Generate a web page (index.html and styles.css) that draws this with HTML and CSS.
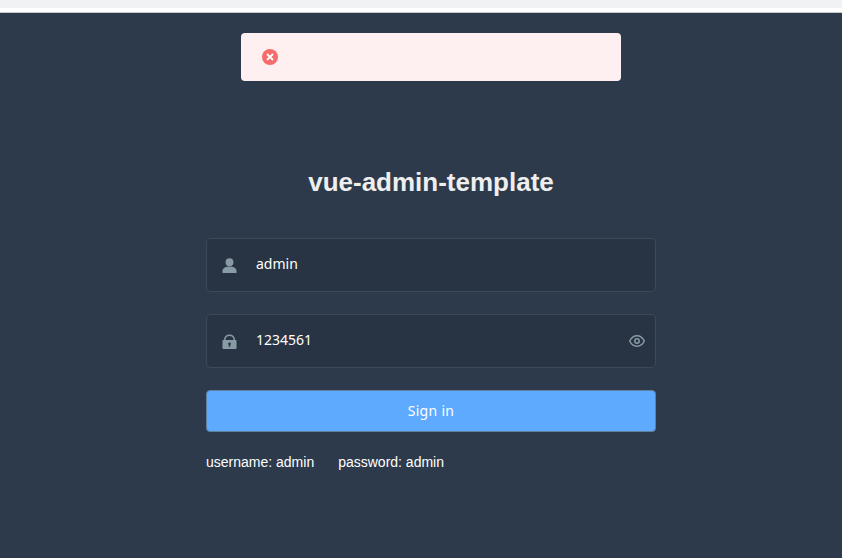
FILE: index.html
```html
<!DOCTYPE html>
<html lang="en">
<head>
    <meta charset="UTF-8">
    <title>vue-admin-template</title>
    <link rel="stylesheet" href="styles.css">
</head>
<body>
<div class="topbar"></div>
<div class="login-container">
    <div class="message">
        <svg class="message-icon" viewBox="0 0 16 16">
            <circle cx="8" cy="8" r="8" fill="#f56c6c"/>
            <path d="M5 5l6 6M11 5l-6 6" stroke="#fff" stroke-width="1.8" fill="none"/>
        </svg>
    </div>
    <form class="login-form">
        <h3 class="title">vue-admin-template</h3>
        <div class="form-item">
            <span class="svg-container">
                <svg viewBox="0 0 16 16" class="icon"><circle cx="8" cy="4.400" r="4.200"/><path d="M.5 16v-2.400C.5 10.600 4.400 9 8 9s7.500 1.600 7.500 4.600V16z"/></svg>
            </span>
            <input class="form-input" type="text" value="admin">
        </div>
        <div class="form-item">
            <span class="svg-container">
                <svg viewBox="0 0 16 16" class="icon"><path d="M2.800 6.500C3 3 5 1.200 8 1.200s5 1.800 5.200 5.300" fill="none" stroke="#889aa4" stroke-width="1.600"/><path fill-rule="evenodd" d="M1.400 6.400h13.200c.5 0 .9.400.9.900v7.800c0 .5-.4.900-.9.900H1.400c-.5 0-.9-.4-.9-.9V7.300c0-.5.400-.9.900-.9zM8 9.200a1.400 1.400 0 0 0-.8 2.600v1.700h1.600v-1.700A1.400 1.400 0 0 0 8 9.200z"/></svg>
            </span>
            <input class="form-input" type="text" value="1234561">
            <span class="show-pwd">
                <svg viewBox="0 0 16 16" class="eye"><path d="M.7 8C2.300 4.600 5 2.800 8 2.800s5.700 1.800 7.300 5.200c-1.600 3.400-4.300 5.200-7.300 5.200S2.300 11.400.7 8z"/><circle cx="8" cy="8" r="2.200"/></svg>
            </span>
        </div>
        <button class="login-btn" type="button">Sign in</button>
        <div class="tips">
            <span>username: admin</span>
            <span>password: admin</span>
        </div>
    </form>
</div>
</body>
</html>
```

FILE: styles.css
```css
html, body {
    height: 100%;
}

body {
    margin: 0;
    display: flex;
    flex-direction: column;
    overflow: hidden;
    background-color: #fff;
    font-family: "Liberation Sans", Arial, sans-serif;
}

.topbar {
    height: 8px;
    margin-bottom: 4px;
    background-color: #f1f2f4;
    flex-shrink: 0;
}

.login-container {
    flex: 1;
    position: relative;
    border-top: 1px solid #c9cbce;
    background-color: #2d3a4b;
}

.message {
    position: absolute;
    top: 20px;
    left: 241px;
    width: 380px;
    height: 48px;
    box-sizing: border-box;
    display: flex;
    align-items: center;
    padding-left: 21px;
    border-radius: 4px;
    background-color: #fef0f0;
}

.message-icon {
    width: 16px;
    height: 16px;
}

.login-form {
    width: 450px;
    margin-left: 206px;
    padding-top: 154px;
}

.title {
    margin: 0 0 41px;
    height: 30px;
    line-height: 30px;
    font-size: 26px;
    font-weight: bold;
    text-align: center;
    color: #eee;
}

.form-item {
    display: flex;
    align-items: center;
    height: 54px;
    box-sizing: border-box;
    margin-bottom: 22px;
    border: 1px solid rgba(255, 255, 255, .1);
    border-radius: 5px;
    background-color: rgba(0, 0, 0, .1);
}

.svg-container {
    display: flex;
    width: 30px;
    margin-left: 15px;
    flex-shrink: 0;
}

.icon {
    width: 15px;
    height: 15px;
    fill: #889aa4;
}

.form-input {
    flex: 1;
    min-width: 0;
    height: 47px;
    padding: 0 0 4px 4px;
    border: 0;
    outline: 0;
    background: transparent;
    font-family: "Noto Sans", sans-serif;
    font-size: 14px;
    color: #fff;
}

.show-pwd {
    display: flex;
    margin-right: 10px;
}

.eye {
    width: 16px;
    height: 16px;
    fill: none;
    stroke: #889aa4;
    stroke-width: 1.5;
}

.login-btn {
    display: block;
    width: 100%;
    height: 42px;
    margin-bottom: 20px;
    padding: 0 0 2px;
    border: 1px solid #5f7f9f;
    border-radius: 4px;
    background-color: #5daaff;
    font-family: "Noto Sans", sans-serif;
    font-size: 14px;
    letter-spacing: .3px;
    color: #fff;
}

.tips {
    display: flex;
    gap: 24px;
    font-size: 14px;
    line-height: 20px;
    color: #fff;
}
```
